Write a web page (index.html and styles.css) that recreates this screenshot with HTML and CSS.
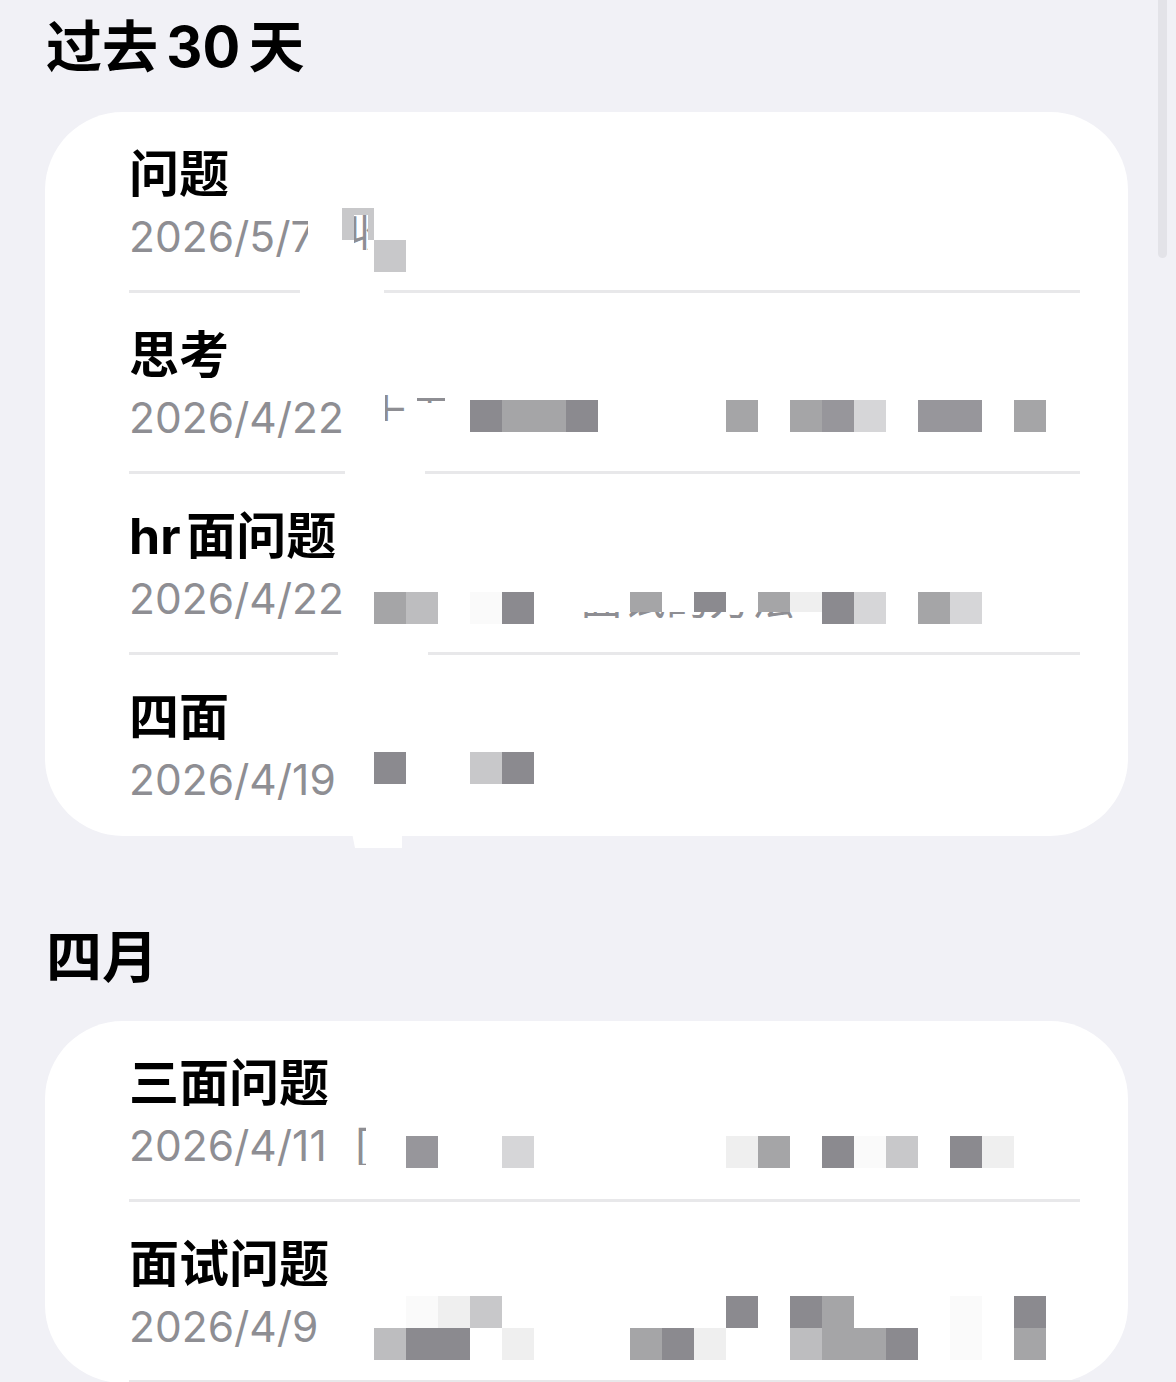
FILE: index.html
```html
<!DOCTYPE html>
<html lang="zh-CN">
<head>
    <meta charset="UTF-8">
    <meta name="viewport" content="width=device-width, initial-scale=1.0">
    <title>历史记录</title>
    <link rel="stylesheet" href="styles.css">
</head>
<body>
    <div class="scrollbar"></div>

    <h2 class="group-title">过去 30 天</h2>
    <ul class="card">
        <li class="row">
            <p class="name">问题</p>
            <p class="date">2026/5/7</p>
            <div class="cover cover-text1"></div>
            <div class="cover cover-line1"></div>
            <div class="mosaic top96">
                <span class="c5"></span>
            </div>
            <div class="mosaic top128">
                <span></span><span class="c5"></span>
            </div>
            <div class="frag frag1"><span>收</span></div>
        </li>
        <li class="row">
            <p class="name">思考</p>
            <p class="date">2026/4/22</p>
            <div class="cover cover-line2"></div>
            <div class="frag frag2"><span>上</span></div>
            <div class="frag frag2b"><span>下</span></div>
            <div class="mosaic top107">
                <span></span><span></span><span></span><span></span>
                <span class="c1"></span><span class="c3"></span><span class="c3"></span><span class="c1"></span>
                <span></span><span></span><span></span><span></span>
                <span class="c3"></span><span></span>
                <span class="c3"></span><span class="c2"></span><span class="c6"></span><span></span>
                <span class="c2"></span><span class="c2"></span><span></span>
                <span class="c3"></span>
            </div>
        </li>
        <li class="row">
            <p class="name">hr 面问题</p>
            <p class="date">2026/4/22</p>
            <div class="cover cover-line3"></div>
            <div class="mosaic top118">
                <span></span><span class="c3"></span><span class="c4"></span><span></span>
                <span class="c8"></span><span class="c1"></span><span></span><span></span><span></span>
                <span class="c3"></span><span></span><span class="c1"></span><span></span>
                <span class="c3"></span><span class="c7"></span><span class="c1"></span><span class="c6"></span><span></span>
                <span class="c3"></span><span class="c6"></span>
            </div>
            <div class="frag frag3"><span>面试的方法一般</span></div>
            <div class="cover cover-text3"></div>
        </li>
        <li class="row end">
            <p class="name">四面</p>
            <p class="date">2026/4/19</p>
            <div class="cover cover-foot"></div>
            <div class="mosaic top97">
                <span></span><span class="c1"></span><span></span><span></span>
                <span class="c5"></span><span class="c1"></span>
            </div>
        </li>
    </ul>

    <h2 class="group-title second">四月</h2>
    <ul class="card">
        <li class="row">
            <p class="name">三面问题</p>
            <p class="date">2026/4/11</p>
            <div class="frag frag5"><span>[</span></div>
            <div class="mosaic top115">
                <span></span><span></span><span class="c2"></span><span></span><span></span>
                <span class="c6"></span><span></span><span></span><span></span><span></span><span></span><span></span>
                <span class="c7"></span><span class="c3"></span><span></span>
                <span class="c1"></span><span class="c8"></span><span class="c5"></span><span></span>
                <span class="c1"></span><span class="c7"></span>
            </div>
        </li>
        <li class="row">
            <p class="name">面试问题</p>
            <p class="date">2026/4/9</p>
            <div class="mosaic top94">
                <span></span><span></span><span class="c8"></span><span class="c7"></span><span class="c5"></span>
                <span></span><span></span><span></span><span></span><span></span><span></span><span></span>
                <span class="c1"></span><span></span><span class="c1"></span><span class="c3"></span>
                <span></span><span></span><span></span><span class="c8"></span><span></span><span class="c1"></span>
            </div>
            <div class="mosaic top126">
                <span></span><span class="c4"></span><span class="c1"></span><span class="c1"></span><span></span>
                <span class="c7"></span><span></span><span></span><span></span>
                <span class="c3"></span><span class="c1"></span><span class="c7"></span><span></span><span></span>
                <span class="c4"></span><span class="c3"></span><span class="c3"></span><span class="c1"></span><span></span>
                <span class="c8"></span><span></span><span class="c3"></span>
            </div>
        </li>
    </ul>
</body>
</html>
```

FILE: styles.css
```css
* {
    margin: 0;
    padding: 0;
    box-sizing: border-box;
}
html, body {
    height: 1382px;
    overflow: hidden;
}
body {
    background: #f1f1f6;
    padding: 0 48px 0 45px;
    font-family: "Inter", "Noto Sans CJK SC", sans-serif;
    color: #000;
    position: relative;
}
.scrollbar {
    position: absolute;
    top: -6px;
    right: 9px;
    width: 9px;
    height: 264px;
    border-radius: 5px;
    background: #e3e3e8;
}
.group-title {
    height: 112px;
    padding: 14px 0 0 1px;
    font-size: 56px;
    line-height: 66px;
    font-weight: 700;
    word-spacing: -5px;
}
.group-title.second {
    height: 185px;
    padding-top: 88px;
}
.card {
    list-style: none;
    background: #fff;
    border-radius: 78px;
    padding-left: 84px;
    padding-right: 48px;
}
.row {
    height: 181px;
    position: relative;
    border-bottom: 3px solid #e8e8ea;
    padding-top: 33px;
}
.row.end {
    border-bottom: 0;
}
.name {
    font-size: 50px;
    line-height: 58px;
    font-weight: 700;
    word-spacing: -6px;
}
.date {
    margin-top: 7px;
    font-size: 42.5px;
    line-height: 54px;
    color: #8e8e93;
}
/* 打码 */
.mosaic {
    position: absolute;
    left: 213px;
    display: flex;
}
.mosaic span {
    flex: none;
    width: 32px;
    height: 32px;
}
.top94 { top: 94px; }
.top96 { top: 96px; }
.top97 { top: 97px; }
.top107 { top: 107px; }
.top115 { top: 115px; }
.top118 { top: 118px; }
.top126 { top: 126px; }
.top128 { top: 128px; }
.c1 { background: #8b8a8f; }
.c2 { background: #97969b; }
.c3 { background: #a5a5a7; }
.c4 { background: #bdbdbf; }
.c5 { background: #c8c8ca; }
.c6 { background: #d6d6d8; }
.c7 { background: #efefef; }
.c8 { background: #fafafa; }
/* 涂抹 */
.cover {
    position: absolute;
    background: #fff;
}
.cover-text1 {
    left: 179px;
    top: 90px;
    width: 34px;
    height: 80px;
}
.cover-line1 {
    left: 171px;
    top: 176px;
    width: 84px;
    height: 6px;
}
.cover-line2 {
    left: 216px;
    top: 176px;
    width: 80px;
    height: 6px;
}
.cover-line3 {
    left: 209px;
    top: 176px;
    width: 90px;
    height: 6px;
}
.cover-text3 {
    left: 451px;
    top: 144px;
    width: 242px;
    height: 6px;
}
.cover-foot {
    left: 223px;
    top: 178px;
    width: 50px;
    height: 15px;
    clip-path: polygon(0 0, 100% 0, 100% 100%, 6% 100%);
}
.frag {
    position: absolute;
    overflow: hidden;
    background: #fff;
    color: #8e8e93;
    font-size: 43px;
    line-height: 43px;
    white-space: nowrap;
}
.frag span {
    display: block;
}
.frag1 {
    left: 225px;
    top: 103px;
    width: 14px;
    height: 35px;
}
.frag1 span {
    margin: -4px 0 0 -5px;
}
.frag2 {
    left: 256px;
    top: 102px;
    width: 30px;
    height: 26px;
    background: none;
}
.frag2 span {
    margin: -2px 0 0 -19px;
}
.frag2b {
    left: 288px;
    top: 105px;
    width: 28px;
    height: 5px;
    background: none;
}
.frag2b span {
    margin: -4px 0 0 -8px;
}
.frag3 {
    left: 451px;
    top: 138px;
    width: 242px;
    height: 6px;
}
.frag3 span {
    margin-top: -34px;
}
.frag5 {
    left: 229px;
    top: 106px;
    width: 8px;
    height: 38px;
    background: none;
}
.frag5 span {
    margin: -3px 0 0 -4px;
}
```
